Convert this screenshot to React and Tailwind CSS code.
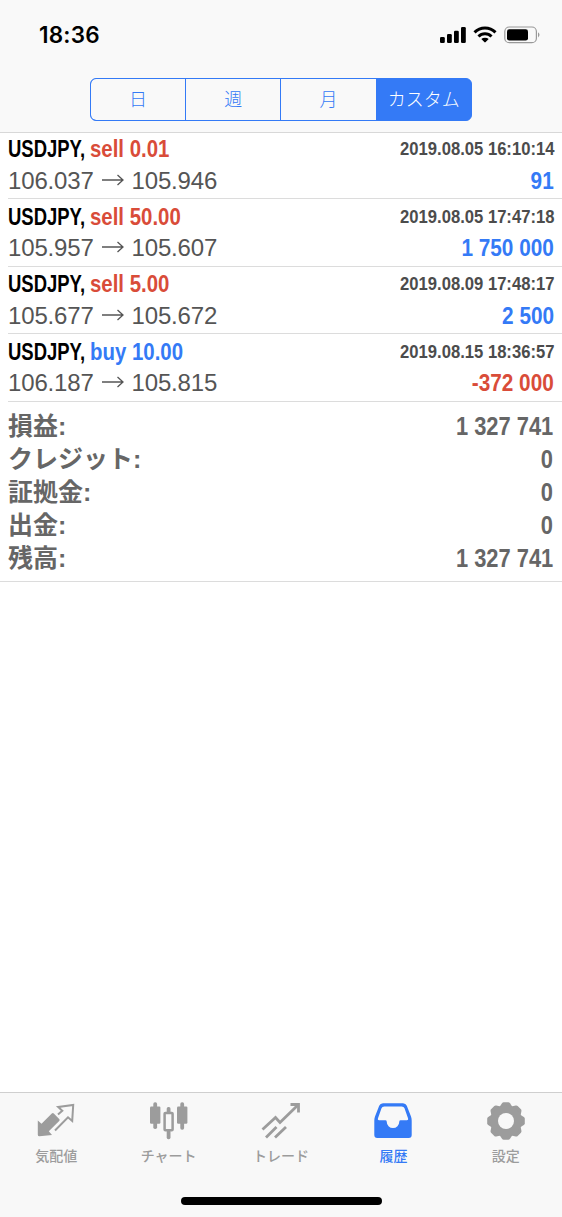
import clsx from "clsx";

const RANGES = ["日", "週", "月", "カスタム"];

const DEALS = [
  { side: "sell", volume: "0.01", open: "106.037", close: "105.946", time: "2019.08.05 16:10:14", profit: "91" },
  { side: "sell", volume: "50.00", open: "105.957", close: "105.607", time: "2019.08.05 17:47:18", profit: "1 750 000" },
  { side: "sell", volume: "5.00", open: "105.677", close: "105.672", time: "2019.08.09 17:48:17", profit: "2 500" },
  { side: "buy", volume: "10.00", open: "106.187", close: "105.815", time: "2019.08.15 18:36:57", profit: "-372 000" },
];

const SUMMARY = [
  ["損益:", "1 327 741"],
  ["クレジット:", "0"],
  ["証拠金:", "0"],
  ["出金:", "0"],
  ["残高:", "1 327 741"],
];

const TABS = [
  { label: "気配値", icon: QuotesIcon },
  { label: "チャート", icon: ChartIcon },
  { label: "トレード", icon: TradeIcon },
  { label: "履歴", icon: HistoryIcon, active: true },
  { label: "設定", icon: SettingsIcon },
];

function QuotesIcon() {
  return (
    <svg width="40" height="40" viewBox="0 0 40 40" fill="none">
      <path d="M1.8 18.5 5.5 21.8 15.8 11.6Q16.8 10.6 17.8 11.6L23.2 17Q24.2 18 23.2 19L12.8 29.2 16 33 3.5 34.3Q1.8 34.3 1.8 32.8Z" fill="currentColor" />
      <path d="M22 12.5 26.3 8.7 22.2 5 37.2 3 36.2 19 32 15.3 19 28.5" stroke="currentColor" strokeWidth="2" />
    </svg>
  );
}

function ChartIcon() {
  return (
    <svg width="40" height="40" viewBox="0 0 40 40" fill="currentColor">
      <rect x="4.3" y="0.3" width="3.8" height="26.7" rx="1.7" />
      <rect x="1" y="4.6" width="10.4" height="17.2" rx="1.2" />
      <rect x="31.3" y="0.3" width="3.8" height="27.5" rx="1.7" />
      <rect x="28" y="4.6" width="10.4" height="17.2" rx="1.2" />
      <rect x="17.7" y="5" width="3.8" height="6" rx="1.7" />
      <rect x="17.7" y="28" width="3.8" height="9.3" rx="1.7" />
      <rect x="15.6" y="11" width="8" height="17.3" rx="0.8" fill="none" stroke="currentColor" strokeWidth="2.5" />
    </svg>
  );
}

function TradeIcon() {
  return (
    <svg width="40" height="40" viewBox="0 0 40 40" fill="none" stroke="currentColor" strokeWidth="2.8">
      <path d="M1.5 27.5 14.5 15.5 19 20.5 37 3" />
      <path d="M29.5 2.5H37.5V10.5" />
      <path d="M5 35.5 15.5 25M14 35.5 25 25" />
    </svg>
  );
}

function HistoryIcon() {
  return (
    <svg width="40" height="40" viewBox="0 0 40 40" fill="currentColor">
      <path fillRule="evenodd" d="M10 1.2H30Q32.8 1.2 33.8 3.7L38 14.5Q38.7 16.3 38.7 18.5V33Q38.7 36 35.7 36H4.3Q1.3 36 1.3 33V18.5Q1.3 16.3 2 14.5L6.2 3.7Q7.2 1.2 10 1.2ZM11.3 4.6Q9.1 4.6 8.5 6.3L4.9 16.5Q4.4 18.2 6 18.2H12.4Q13.6 18.2 13.7 19.6A6.3 6.5 0 0 0 26.3 19.6Q26.4 18.2 27.6 18.2H34Q35.6 18.2 35.1 16.5L31.5 6.3Q30.9 4.6 28.7 4.6Z" />
    </svg>
  );
}

function SettingsIcon() {
  return (
    <svg width="40" height="40" viewBox="-20 -19 40 40" fill="currentColor">
      {[0, 45, 90, 135].map(a => (
        <path key={a} transform={`rotate(${a})`} d="M-6.5-14-4-17.8Q-3.3-18.8-2.3-18.8H2.3Q3.3-18.8 4-17.8L6.5-14V14L4 17.8Q3.3 18.8 2.3 18.8H-2.3Q-3.3 18.8-4 17.8L-6.5 14Z" />
      ))}
      <circle r="15.6" />
      <circle r="8" className="fill-[#f8f8f8]" />
    </svg>
  );
}

function StatusBar() {
  return (
    <div className="flex h-[70px] items-center justify-between pr-[21px] pl-[39px]">
      <span className="font-[Inter,sans-serif] text-[22.5px] leading-none font-semibold tracking-[0.2px] text-black">18:36</span>
      <svg width="101" height="20" viewBox="0 0 101 20">
        <rect x="0" y="12" width="4.8" height="6" rx="1.3" />
        <rect x="7" y="9" width="4.8" height="9" rx="1.3" />
        <rect x="14" y="5.8" width="4.8" height="12.2" rx="1.3" />
        <rect x="21" y="2" width="4.8" height="16" rx="1.3" />
        <g fill="none" stroke="#000" strokeWidth="3">
          <path d="M34.5 7.4A15 15 0 0 1 55.5 7.4" />
          <path d="M38.5 11.5A9.2 9.2 0 0 1 51.5 11.5" />
        </g>
        <path d="M41.3 14.1A5.5 5.5 0 0 1 48.7 14.1L45.7 17.1Q45 17.8 44.3 17.1Z" />
        <rect x="64.8" y="2" width="31.6" height="15.7" rx="4.5" fill="none" stroke="#999" strokeWidth="1.2" />
        <rect x="67" y="4.3" width="21" height="11.2" rx="2.3" />
        <path d="M98 7.3Q101 9.8 98 12.5Z" fill="#999" />
      </svg>
    </div>
  );
}

function DealRow({ side, volume, open, close, time, profit }) {
  return (
    <li className="ml-2 h-[67.5px] border-b border-[#dcdcdc] pt-0.5 pr-2">
      <div className="flex h-[31.5px] items-center justify-between whitespace-nowrap text-2xl font-bold">
        <div className="flex">
          <span className="w-[82px] origin-left scale-x-[0.77] text-black">USDJPY,</span>
          <span className={clsx("origin-left scale-x-[0.85]", side === "buy" ? "text-[#347af6]" : "text-[#d94c39]")}>
            {side} {volume}
          </span>
        </div>
        <span className="mb-px origin-right scale-x-[0.875] text-[19px] text-[#4c4c4c]">{time}</span>
      </div>
      <div className="flex h-[31.5px] items-center justify-between whitespace-nowrap text-2xl">
        <div className="flex items-center text-[#555]">
          <span className="w-[94px] tracking-[-0.15px]">{open}</span>
          <svg width="22" height="14" viewBox="0 0 22 14" fill="none" stroke="currentColor" strokeWidth="1.3">
            <path d="M0 6H21M15.5 1 21 6 15.5 11" />
          </svg>
          <span className="ml-[7.5px] tracking-[-0.15px]">{close}</span>
        </div>
        <span className={clsx("origin-right scale-x-[0.865] font-bold", profit.startsWith("-") ? "text-[#d94c39]" : "text-[#347af6]")}>
          {profit}
        </span>
      </div>
    </li>
  );
}

export default function App() {
  return (
    <div className="flex h-[1217px] w-[562px] flex-col overflow-hidden bg-white font-['Liberation_Sans','Noto_Sans_CJK_JP',sans-serif]">
      <header className="h-[132.5px] shrink-0 border-b border-[#d8d8d8] bg-[#f9f9f9]">
        <StatusBar />
        <div className="mx-auto mt-[7.5px] flex h-[43px] w-[382px] gap-px overflow-hidden rounded-md border border-[#347af6] bg-[#347af6]">
          {RANGES.map((label, i) => (
            <button
              key={label}
              className={clsx(
                "pb-px font-['Noto_Sans_CJK_JP',sans-serif] text-[18px] font-light",
                i === 3 ? "bg-[#347af6] text-white" : "bg-[#f9f9f9] text-[#347af6]",
                i === 0 ? "w-[94px] rounded-l-[5px]" : "flex-1",
              )}
            >
              {label}
            </button>
          ))}
        </div>
      </header>

      <main className="flex-1 -mt-px">
        <ul>
          {DEALS.map(deal => <DealRow key={deal.time} {...deal} />)}
        </ul>
        <dl className="border-b border-[#dcdcdc] pt-[8.5px] pr-[9px] pb-[5.5px] pl-2 font-bold text-[#666]">
          {SUMMARY.map(([label, value]) => (
            <div key={label} className="flex h-[33px] items-center justify-between whitespace-nowrap">
              <dt className="text-[25px] leading-none font-bold">{label}</dt>
              <dd className="origin-right scale-x-[0.875] text-[25px] leading-none">{value}</dd>
            </div>
          ))}
        </dl>
      </main>

      <nav className="flex h-[125px] shrink-0 flex-col border-t border-[#cfcfcf] bg-[#f8f8f8]">
        <div className="grid grid-cols-5 pt-[9px]">
          {TABS.map(({ label, icon: Icon, active }) => (
            <button key={label} className={clsx("flex flex-col items-center", active ? "text-[#347af6]" : "text-[#9c9c9c]")}>
              <Icon />
              <span className="mt-[4.5px] font-['Noto_Sans_CJK_JP',sans-serif] text-[14px] leading-4 font-medium">{label}</span>
            </button>
          ))}
        </div>
        <div className="mx-auto mt-auto mb-3 h-2 w-[201px] rounded-full bg-black" />
      </nav>
    </div>
  );
}
